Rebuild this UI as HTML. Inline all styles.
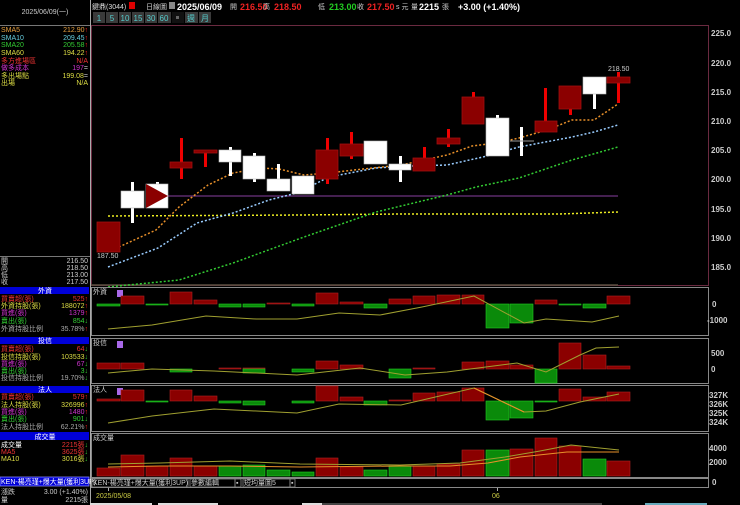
<!DOCTYPE html>
<html><head><meta charset="utf-8"><style>
html,body{margin:0;padding:0;background:#000;width:740px;height:505px;overflow:hidden}
svg{display:block}
text{font-family:"Liberation Sans","Noto Sans CJK TC",sans-serif}
.s{font-size:7px}
.b{font-size:9px;font-weight:bold}
</style></head><body>
<svg width="740" height="505" viewBox="0 0 740 505" xmlns="http://www.w3.org/2000/svg">
<rect width="740" height="505" fill="#000"/>
<!-- top bar -->
<text x="92" y="9" class="s" fill="#ddd" font-size="8">鍵鼎(3044)</text>
<rect x="129" y="2" width="6" height="7" fill="#d00"/>
<text x="146" y="9" class="s" fill="#ccc" font-size="8">日線圖</text>
<rect x="169" y="2" width="6" height="7" fill="#888"/>
<text x="177" y="10" class="b" fill="#fff">2025/06/09</text>
<text x="230" y="9" class="s" fill="#ccc" font-size="8">開</text>
<text x="240" y="10" class="b" fill="#e22">216.50</text>
<text x="263" y="9" class="s" fill="#ccc" font-size="8">高</text>
<text x="274" y="10" class="b" fill="#e22">218.50</text>
<text x="318" y="9" class="s" fill="#ccc" font-size="8">低</text>
<text x="329" y="10" class="b" fill="#2c2">213.00</text>
<text x="357" y="9" class="s" fill="#ccc" font-size="8">收</text>
<text x="367" y="10" class="b" fill="#e22">217.50</text>
<text x="396" y="9" class="s" fill="#ccc" font-size="8">s 元</text>
<text x="411" y="9" class="s" fill="#ccc" font-size="8">量</text>
<text x="419" y="10" class="b" fill="#fff">2215</text>
<text x="442" y="9" class="s" fill="#ccc" font-size="8">張</text>
<text x="458" y="10" class="b" fill="#fff">+3.00 (+1.40%)</text>
<!-- buttons -->
<g fill="#3a3a3a">
<rect x="93" y="12" width="12" height="11"/><rect x="106" y="12" width="12" height="11"/><rect x="119" y="12" width="12" height="11"/><rect x="132" y="12" width="12" height="11"/><rect x="145" y="12" width="12" height="11"/><rect x="158" y="12" width="13" height="11"/><rect x="185" y="12" width="13" height="11"/><rect x="199" y="12" width="12" height="11"/>
</g>
<rect x="172" y="12" width="12" height="11" fill="#111"/><rect x="176" y="16" width="3" height="3" fill="#666"/>
<g font-size="8" fill="#5cc" text-anchor="middle">
<text x="99" y="21">1</text><text x="112" y="21">5</text><text x="125" y="21">10</text><text x="138" y="21">15</text><text x="151" y="21">30</text><text x="164" y="21">60</text><text x="191" y="21">週</text><text x="205" y="21">月</text>
</g>
<!-- left panel -->
<line x1="90.5" y1="0" x2="90.5" y2="505" stroke="#aaa"/>
<line x1="0" y1="25.5" x2="90" y2="25.5" stroke="#777"/>
<text x="45" y="14" class="s" fill="#ccc" text-anchor="middle">2025/06/09(一)</text>
<g class="s">
<text x="1" y="32" fill="#e8a040">SMA5</text><text x="88" y="32" fill="#e8a040" text-anchor="end">212.90<tspan fill="#f22">↑</tspan></text>
<text x="1" y="40" fill="#6cd">SMA10</text><text x="88" y="40" fill="#6cd" text-anchor="end">209.45<tspan fill="#f22">↑</tspan></text>
<text x="1" y="47" fill="#3c3">SMA20</text><text x="88" y="47" fill="#3c3" text-anchor="end">205.58<tspan fill="#f22">↑</tspan></text>
<text x="1" y="55" fill="#dd4">SMA60</text><text x="88" y="55" fill="#dd4" text-anchor="end">194.22<tspan fill="#f22">↑</tspan></text>
<text x="1" y="63" fill="#e33">多方進場區</text><text x="88" y="63" fill="#e33" text-anchor="end">N/A</text>
<text x="1" y="70" fill="#c3c">做多成本</text><text x="88" y="70" fill="#c3c" text-anchor="end">197<tspan fill="#ccc">=</tspan></text>
<text x="1" y="78" fill="#dd4">多出場點</text><text x="88" y="78" fill="#dd4" text-anchor="end">199.08<tspan fill="#ccc">=</tspan></text>
<text x="1" y="85" fill="#dd4">出場</text><text x="88" y="85" fill="#dd4" text-anchor="end">N/A</text>
</g>
<line x1="0" y1="256.5" x2="90" y2="256.5" stroke="#777"/>
<g class="s" fill="#ccc">
<text x="1" y="263">開</text><text x="88" y="263" text-anchor="end">216.50</text>
<text x="1" y="270">高</text><text x="88" y="270" text-anchor="end">218.50</text>
<text x="1" y="277">低</text><text x="88" y="277" text-anchor="end">213.00</text>
<text x="1" y="284">收</text><text x="88" y="284" text-anchor="end">217.50</text>
</g>
<g fill="#0000d8"><rect x="0" y="287" width="89" height="7"/><rect x="0" y="337" width="89" height="7"/><rect x="0" y="386" width="89" height="7"/><rect x="0" y="432" width="89" height="8"/><rect x="0" y="477" width="89" height="9" stroke="#88f" stroke-width="0.8"/></g>
<g class="s" fill="#fff" text-anchor="middle"><text x="45" y="293">外資</text><text x="45" y="343">投信</text><text x="45" y="392">法人</text><text x="45" y="439">成交量</text></g>
<text x="1" y="484" class="s" fill="#fff">KEN-楊亮瑾+爆大量(獲利3UP)</text>
<g class="s">
<text x="1" y="301" fill="#e33">買賣超(張)</text><text x="88" y="301" fill="#e33" text-anchor="end">525<tspan fill="#f22">↑</tspan></text>
<text x="1" y="308" fill="#dd4">外資持股(張)</text><text x="88" y="308" fill="#dd4" text-anchor="end">188072<tspan fill="#f22">↑</tspan></text>
<text x="1" y="315" fill="#c3c">買進(張)</text><text x="88" y="315" fill="#c3c" text-anchor="end">1379<tspan fill="#f22">↑</tspan></text>
<text x="1" y="323" fill="#3c3">賣出(張)</text><text x="88" y="323" fill="#3c3" text-anchor="end">854<tspan fill="#3c3">↓</tspan></text>
<text x="1" y="331" fill="#aaa">外資持股比例</text><text x="88" y="331" fill="#aaa" text-anchor="end">35.78%<tspan fill="#f22">↑</tspan></text>

<text x="1" y="351" fill="#e33">買賣超(張)</text><text x="88" y="351" fill="#e33" text-anchor="end">64<tspan fill="#3c3">↓</tspan></text>
<text x="1" y="359" fill="#dd4">投信持股(張)</text><text x="88" y="359" fill="#dd4" text-anchor="end">103533<tspan fill="#3c3">↓</tspan></text>
<text x="1" y="366" fill="#c3c">買進(張)</text><text x="88" y="366" fill="#c3c" text-anchor="end">67<tspan fill="#3c3">↓</tspan></text>
<text x="1" y="373" fill="#3c3">賣出(張)</text><text x="88" y="373" fill="#3c3" text-anchor="end">3<tspan fill="#3c3">↓</tspan></text>
<text x="1" y="380" fill="#aaa">投信持股比例</text><text x="88" y="380" fill="#aaa" text-anchor="end">19.70%<tspan fill="#3c3">↓</tspan></text>

<text x="1" y="399" fill="#e33">買賣超(張)</text><text x="88" y="399" fill="#e33" text-anchor="end">579<tspan fill="#f22">↑</tspan></text>
<text x="1" y="407" fill="#dd4">法人持股(張)</text><text x="88" y="407" fill="#dd4" text-anchor="end">326996<tspan fill="#f22">↑</tspan></text>
<text x="1" y="414" fill="#c3c">買進(張)</text><text x="88" y="414" fill="#c3c" text-anchor="end">1480<tspan fill="#f22">↑</tspan></text>
<text x="1" y="421" fill="#3c3">賣出(張)</text><text x="88" y="421" fill="#3c3" text-anchor="end">901<tspan fill="#3c3">↓</tspan></text>
<text x="1" y="429" fill="#aaa">法人持股比例</text><text x="88" y="429" fill="#aaa" text-anchor="end">62.21%<tspan fill="#f22">↑</tspan></text>

<text x="1" y="447" fill="#fff">成交量</text><text x="88" y="447" fill="#e33" text-anchor="end">2215張<tspan fill="#3c3">↓</tspan></text>
<text x="1" y="454" fill="#e33">MA5</text><text x="88" y="454" fill="#e33" text-anchor="end">3625張<tspan fill="#3c3">↓</tspan></text>
<text x="1" y="461" fill="#dd4">MA10</text><text x="88" y="461" fill="#dd4" text-anchor="end">3016張<tspan fill="#3c3">↓</tspan></text>

<text x="1" y="494" fill="#ccc">漲跌</text><text x="88" y="494" fill="#ccc" text-anchor="end">3.00 (+1.40%)</text>
<text x="1" y="502" fill="#ccc">量</text><text x="88" y="502" fill="#ccc" text-anchor="end">2215張</text>
</g>

<!-- main chart frame -->
<rect x="91.5" y="25.5" width="617" height="260" fill="none" stroke="#6a2a40"/>
<g font-size="8" fill="#ccc" font-weight="bold">
<text x="711" y="36">225.0</text><text x="711" y="66">220.0</text><text x="711" y="95">215.0</text><text x="711" y="124">210.0</text><text x="711" y="153">205.0</text><text x="711" y="182">200.0</text><text x="711" y="212">195.0</text><text x="711" y="241">190.0</text><text x="711" y="270">185.0</text>
</g>
<line x1="164" y1="196" x2="618" y2="196" stroke="#5a2a6a" stroke-width="1.5"/>
<line x1="91" y1="285" x2="618" y2="285" stroke="#5a5040" stroke-width="1.5"/>
<polyline points="108,216 300,215 400,214 500,214 560,214 618,212" fill="none" stroke="#ee2" stroke-width="1.5" stroke-dasharray="2,2"/>
<polyline points="108,287 179,280 233,263 304,237 376,212 447,195 476,187 519,178 572,160 618,147" fill="none" stroke="#3c3" stroke-width="1.5" stroke-dasharray="2,2"/>
<polyline points="108,267 158,248 197,223 233,213 269,200 297,193 329,177 376,168 411,166 447,165 483,157 519,147 572,137 594,132 618,125" fill="none" stroke="#9cf" stroke-width="1.5" stroke-dasharray="2,2"/>
<polyline points="108,252 156,230 179,207 208,185 233,173 261,168 279,169 304,175 329,173 354,170 401,165 447,155 472,146 497,143 519,138 547,130 572,120 594,120 618,104" fill="none" stroke="#e8902a" stroke-width="1.5" stroke-dasharray="2,2"/>
<!-- candles -->
<g fill="#e00">
<rect x="131" y="182" width="3" height="41" fill="#fff"/>
<rect x="156" y="182" width="3" height="4" fill="#fff"/>
<rect x="180" y="138" width="3" height="41"/>
<rect x="204" y="150" width="3" height="17"/>
<rect x="229" y="147" width="3" height="29" fill="#fff"/>
<rect x="253" y="153" width="3" height="29" fill="#fff"/>
<rect x="277" y="164" width="3" height="15" fill="#fff"/>
<rect x="326" y="138" width="3" height="46"/>
<rect x="350" y="132" width="3" height="27"/>
<rect x="399" y="156" width="3" height="26" fill="#fff"/>
<rect x="423" y="147" width="3" height="11"/>
<rect x="447" y="129" width="3" height="18"/>
<rect x="472" y="92" width="3" height="6"/>
<rect x="496" y="115" width="3" height="4" fill="#fff"/>
<rect x="520" y="127" width="3" height="29" fill="#fff"/>
<rect x="544" y="88" width="3" height="34"/>
<rect x="569" y="100" width="3" height="15"/>
<rect x="593" y="85" width="3" height="24" fill="#fff"/>
<rect x="617" y="72" width="3" height="31"/>
</g>
<line x1="510" y1="141" x2="534" y2="141" stroke="#999"/>
<g fill="#8b0000" stroke="#a01010" stroke-width="0.8">
<rect x="97" y="222" width="23" height="30"/>
<rect x="170" y="162" width="22" height="6"/>
<rect x="194" y="150" width="23" height="3"/>
<rect x="316" y="150" width="22" height="29"/>
<rect x="340" y="144" width="23" height="12"/>
<rect x="413" y="158" width="22" height="13"/>
<rect x="437" y="138" width="23" height="6"/>
<rect x="462" y="97" width="22" height="27"/>
<rect x="535" y="121" width="22" height="11"/>
<rect x="559" y="86" width="22" height="23"/>
<rect x="607" y="77" width="23" height="6"/>
</g>
<g fill="#fff" stroke="#bbb" stroke-width="0.6">
<rect x="121" y="191" width="23" height="17"/>
<rect x="146" y="184" width="22" height="24"/>
<rect x="219" y="150" width="22" height="12"/>
<rect x="243" y="156" width="22" height="23"/>
<rect x="267" y="179" width="23" height="12"/>
<rect x="292" y="176" width="22" height="18"/>
<rect x="364" y="141" width="23" height="23"/>
<rect x="389" y="164" width="22" height="6"/>
<rect x="486" y="118" width="23" height="38"/>
<rect x="583" y="77" width="23" height="17"/>
</g>
<polygon points="146,184 168,196 146,208" fill="#8b0000"/>
<text x="97" y="258" class="s" fill="#ccc">187.50</text>
<text x="608" y="71" class="s" fill="#ccc">218.50</text>

<!-- sub panels -->
<g fill="none" stroke="#888" stroke-width="1">
<rect x="91.5" y="287.5" width="617" height="48"/>
<rect x="91.5" y="338.5" width="617" height="45"/>
<rect x="91.5" y="385.5" width="617" height="46"/>
<rect x="91.5" y="433.5" width="617" height="44"/>
<rect x="91.5" y="478.5" width="617" height="9"/>
</g>
<g class="s" fill="#ccc"><text x="93" y="294">外資</text><text x="93" y="345">投信</text><text x="93" y="392">法人</text><text x="93" y="440">成交量</text></g>
<g fill="#a868e8"><rect x="117" y="290" width="6" height="7"/><rect x="117" y="341" width="6" height="7"/><rect x="117" y="388" width="6" height="7"/></g>
<g font-size="8" fill="#ccc" font-weight="bold">
<text x="712" y="307">0</text><text x="707" y="323">-1000</text>
<text x="711" y="356">500</text><text x="711" y="372">0</text>
<text x="709" y="398">327K</text><text x="709" y="407">326K</text><text x="709" y="416">325K</text><text x="709" y="425">324K</text>
<text x="709" y="451">4000</text><text x="709" y="465">2000</text><text x="712" y="485">0</text>
</g>
<!-- 外資 bars zero 304 -->
<g fill="#8b0000" stroke="#b02020" stroke-width="0.6">
<rect x="121" y="296" width="23" height="8"/><rect x="170" y="292" width="22" height="12"/><rect x="194" y="300" width="23" height="4"/><rect x="267" y="303" width="23" height="1"/><rect x="316" y="293" width="22" height="11"/><rect x="340" y="302" width="23" height="2"/><rect x="389" y="299" width="22" height="5"/><rect x="413" y="296" width="22" height="8"/><rect x="437" y="295" width="23" height="9"/><rect x="462" y="295" width="22" height="9"/><rect x="535" y="300" width="22" height="4"/><rect x="607" y="296" width="23" height="8"/>
</g>
<g fill="#0a8a0a" stroke="#2c2" stroke-width="0.6">
<rect x="97" y="304" width="23" height="2"/><rect x="146" y="304" width="22" height="1"/><rect x="219" y="304" width="22" height="3"/><rect x="243" y="304" width="22" height="3"/><rect x="292" y="304" width="22" height="2"/><rect x="364" y="304" width="23" height="4"/><rect x="486" y="304" width="23" height="24"/><rect x="510" y="304" width="23" height="19"/><rect x="559" y="304" width="22" height="1"/><rect x="583" y="304" width="23" height="4"/>
</g>
<polyline points="108,329 152,325 206,316 256,319 297,319 339,313 380,315 422,307 474,296 524,323 546,319 592,322 619,316" fill="none" stroke="#a0a030" stroke-width="1"/>
<!-- 投信 zero 369 -->
<g fill="#8b0000" stroke="#b02020" stroke-width="0.6">
<rect x="97" y="363" width="23" height="6"/><rect x="121" y="363" width="23" height="6"/><rect x="219" y="368" width="22" height="1"/><rect x="243" y="368" width="22" height="1"/><rect x="316" y="361" width="22" height="8"/><rect x="340" y="365" width="23" height="4"/><rect x="413" y="368" width="22" height="1"/><rect x="462" y="362" width="22" height="7"/><rect x="486" y="361" width="23" height="8"/><rect x="510" y="365" width="23" height="4"/><rect x="559" y="343" width="22" height="26"/><rect x="583" y="355" width="23" height="14"/><rect x="607" y="366" width="23" height="3"/>
</g>
<g fill="#0a8a0a" stroke="#2c2" stroke-width="0.6">
<rect x="170" y="369" width="22" height="3"/><rect x="243" y="369" width="22" height="4"/><rect x="292" y="369" width="22" height="3"/><rect x="389" y="369" width="22" height="9"/><rect x="535" y="369" width="22" height="14"/>
</g>
<polyline points="108,373 152,369 214,371 297,375 360,368 405,375 447,372 517,363 546,372 580,355 596,348 619,347" fill="none" stroke="#a0a030" stroke-width="1"/>
<!-- 法人 base 401 -->
<g fill="#8b0000" stroke="#b02020" stroke-width="0.6">
<rect x="97" y="399" width="23" height="2"/><rect x="121" y="390" width="23" height="11"/><rect x="170" y="390" width="22" height="11"/><rect x="194" y="396" width="23" height="5"/><rect x="316" y="386" width="22" height="15"/><rect x="340" y="397" width="23" height="4"/><rect x="389" y="400" width="22" height="1"/><rect x="413" y="393" width="22" height="8"/><rect x="437" y="392" width="23" height="9"/><rect x="462" y="388" width="22" height="13"/><rect x="559" y="389" width="22" height="12"/><rect x="583" y="397" width="23" height="4"/><rect x="607" y="392" width="23" height="9"/>
</g>
<g fill="#0a8a0a" stroke="#2c2" stroke-width="0.6">
<rect x="146" y="401" width="22" height="1"/><rect x="219" y="401" width="22" height="2"/><rect x="243" y="401" width="22" height="4"/><rect x="292" y="401" width="22" height="2"/><rect x="364" y="401" width="23" height="4"/><rect x="486" y="401" width="23" height="19"/><rect x="510" y="401" width="23" height="17"/><rect x="535" y="401" width="22" height="1"/>
</g>
<polyline points="108,423 152,416 214,409 297,413 339,404 401,405 474,388 524,412 546,411 580,402 619,394" fill="none" stroke="#a0a030" stroke-width="1"/>
<polyline points="474,388 524,412" fill="none" stroke="#e8902a" stroke-width="1"/>
<!-- volume base 476 -->
<g fill="#8b0000" stroke="#b02020" stroke-width="0.6">
<rect x="97" y="468" width="23" height="8"/><rect x="121" y="455" width="23" height="21"/><rect x="146" y="466" width="22" height="10"/><rect x="170" y="458" width="22" height="18"/><rect x="194" y="466" width="23" height="10"/><rect x="316" y="458" width="22" height="18"/><rect x="340" y="467" width="23" height="9"/><rect x="413" y="466" width="22" height="10"/><rect x="437" y="464" width="23" height="12"/><rect x="462" y="450" width="22" height="26"/><rect x="510" y="449" width="23" height="27"/><rect x="535" y="438" width="22" height="38"/><rect x="559" y="446" width="22" height="30"/><rect x="607" y="461" width="23" height="15"/>
</g>
<g fill="#0a8a0a" stroke="#2c2" stroke-width="0.6">
<rect x="219" y="466" width="22" height="10"/><rect x="243" y="465" width="22" height="11"/><rect x="267" y="470" width="23" height="6"/><rect x="292" y="472" width="22" height="4"/><rect x="364" y="470" width="23" height="6"/><rect x="389" y="466" width="22" height="10"/><rect x="486" y="450" width="23" height="26"/><rect x="583" y="459" width="23" height="17"/>
</g>
<polyline points="108,464 160,463 230,461 300,464 400,465 460,463 505,457 540,451 571,445 619,450" fill="none" stroke="#a0a030" stroke-width="1"/>
<polyline points="108,467 160,466 230,466 300,467 400,466 450,466 488,463 520,457 567,452 619,452" fill="none" stroke="#e8902a" stroke-width="1"/>
<!-- toolbar inside chart -->
<g fill="none" stroke="#888" stroke-width="0.8"><rect x="92" y="479" width="96" height="8"/><rect x="190" y="479" width="45" height="8"/><rect x="235" y="479" width="6" height="8"/><rect x="243" y="479" width="47" height="8"/><rect x="290" y="479" width="5" height="8"/></g>
<g class="s" fill="#ccc" font-size="6"><text x="93" y="485">KEN-楊亮瑾+爆大量(獲利3UP)</text><text x="191" y="485">參數編輯</text><text x="244" y="485">短均量圖5</text><text x="236" y="485">▪</text><text x="291" y="485">▪</text></g>
<!-- dates -->
<line x1="108.5" y1="488" x2="108.5" y2="491" stroke="#aaa"/>
<line x1="497.5" y1="488" x2="497.5" y2="491" stroke="#aaa"/>
<text x="96" y="498" class="s" fill="#cc4" font-size="8">2025/05/08</text>
<text x="492" y="498" class="s" fill="#cc4" font-size="8">06</text>
<!-- bottom strip -->
<g fill="#ddd"><rect x="90" y="503" width="62" height="2"/><rect x="158" y="503" width="60" height="2"/><rect x="302" y="503" width="20" height="2"/></g>
<rect x="322" y="503" width="280" height="2" fill="#444"/>
<rect x="645" y="503" width="62" height="2" fill="#6ab"/>
</svg>
</body></html>
